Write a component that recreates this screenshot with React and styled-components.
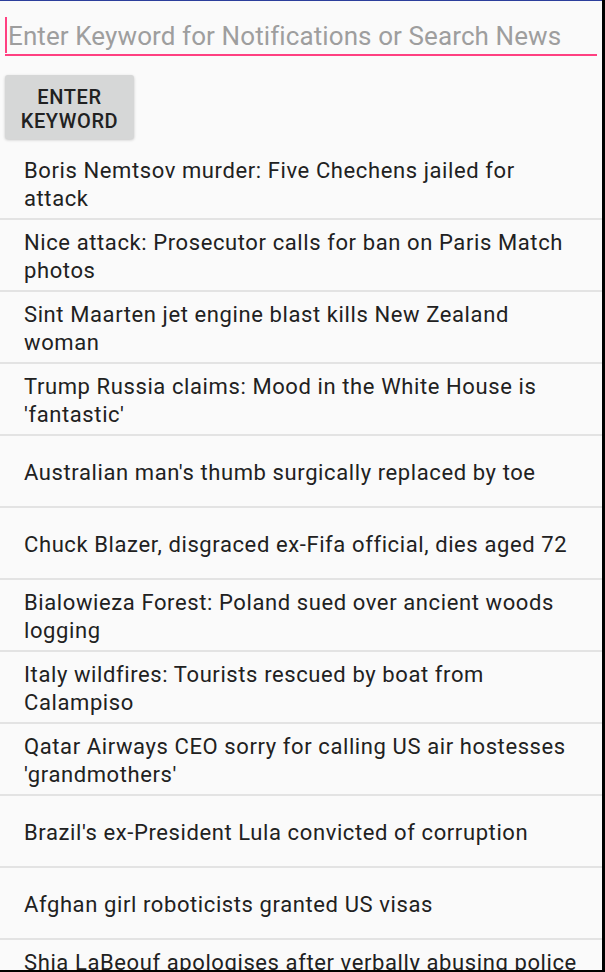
import * as React from "react"
import styled, { createGlobalStyle } from 'styled-components';

const GlobalStyle = createGlobalStyle`
  html, body {
    margin: 0;
    padding: 0;
    background: #000;
  }
  body {
    font-family: Roboto, "Noto Sans", sans-serif;
  }
`;

const Screen = styled.div`
  width: 602px;
  height: 969px;
  background: #fafafa;
  border-top: 1px solid #2c3e9c;
  overflow: hidden;
`;

const SearchField = styled.div`
  margin: 14px 5px 0 5px;
  height: 39px;
  border-bottom: 2px solid #ff4081;
  display: flex;
  align-items: center;
`;

const Cursor = styled.span`
  width: 2px;
  height: 36px;
  background: #ff4081;
  flex-shrink: 0;
`;

const KeywordInput = styled.input`
  flex: 1;
  min-width: 0;
  border: none;
  outline: none;
  background: transparent;
  padding: 3px 0 0 1px;
  font-family: Roboto, sans-serif;
  font-size: 26px;
  letter-spacing: 0.1px;
  color: #212121;

  &::placeholder {
    color: #9e9e9e;
  }
`;

const EnterButton = styled.button`
  display: block;
  margin: 19px 0 9px 5px;
  width: 129px;
  height: 64px;
  border: none;
  border-radius: 3px;
  background: #d6d7d7;
  box-shadow: 0 1px 3px rgba(0, 0, 0, 0.22);
  font-family: Roboto, sans-serif;
  font-weight: 500;
  font-size: 20px;
  line-height: 24px;
  letter-spacing: 0.6px;
  color: #212121;
  text-transform: uppercase;
  padding: 4px 8px 0;
`;

const NewsList = styled.ul`
  list-style: none;
  margin: 0;
  padding: 0;
`;

const NewsRow = styled.li`
  height: 72px;
  box-sizing: border-box;
  padding: 0 16px 0 24px;
  display: flex;
  align-items: ${props => (props.lines > 1 ? 'flex-start' : 'center')};
  padding-top: ${props => (props.lines > 1 ? '9px' : '4px')};
  border-bottom: 2px solid #e3e3e3;
  font-size: 22px;
  line-height: 28px;
  letter-spacing: 0.6px;
  color: #212121;
  white-space: pre-line;
`;

// line breaks as the list wraps them on the device
const headlines = [
  "Boris Nemtsov murder: Five Chechens jailed for\nattack",
  "Nice attack: Prosecutor calls for ban on Paris Match\nphotos",
  "Sint Maarten jet engine blast kills New Zealand\nwoman",
  "Trump Russia claims: Mood in the White House is\n'fantastic'",
  "Australian man's thumb surgically replaced by toe",
  "Chuck Blazer, disgraced ex-Fifa official, dies aged 72",
  "Bialowieza Forest: Poland sued over ancient woods\nlogging",
  "Italy wildfires: Tourists rescued by boat from\nCalampiso",
  "Qatar Airways CEO sorry for calling US air hostesses\n'grandmothers'",
  "Brazil's ex-President Lula convicted of corruption",
  "Afghan girl roboticists granted US visas",
  "Shia LaBeouf apologises after verbally abusing police\nofficers",
];

const App = () => {
  return (
    <>
      <GlobalStyle />
      <Screen>
        <SearchField>
          <Cursor />
          <KeywordInput placeholder="Enter Keyword for Notifications or Search News" />
        </SearchField>
        <EnterButton>Enter Keyword</EnterButton>
        <NewsList>
          {headlines.map(title => (
            <NewsRow key={title} lines={title.split("\n").length}>
              {title}
            </NewsRow>
          ))}
        </NewsList>
      </Screen>
    </>
  )
}

export default App
